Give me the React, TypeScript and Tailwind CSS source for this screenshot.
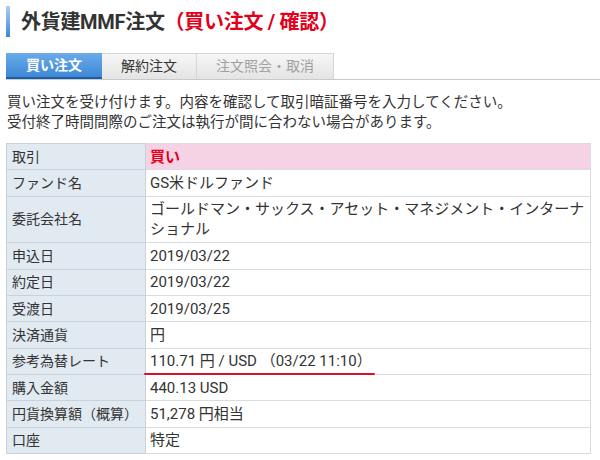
const rows: { label: string; value: React.ReactNode; pink?: boolean }[] = [
  { label: "取引", value: <span className="font-bold text-[#e5001e]">買い</span>, pink: true },
  { label: "ファンド名", value: "GS米ドルファンド" },
  { label: "委託会社名", value: "ゴールドマン・サックス・アセット・マネジメント・インターナショナル" },
  { label: "申込日", value: "2019/03/22" },
  { label: "約定日", value: "2019/03/22" },
  { label: "受渡日", value: "2019/03/25" },
  { label: "決済通貨", value: "円" },
  {
    label: "参考為替レート",
    value: (
      <span className="relative inline-block">
        110.71 円 / USD （03/22 11:10）
        <span className="absolute left-[-6px] right-[-3px] bottom-[-4px] h-[2.5px] rounded-full bg-[#d8102a]" />
      </span>
    ),
  },
  { label: "購入金額", value: "440.13 USD" },
  { label: "円貨換算額（概算）", value: "51,278 円相当" },
  { label: "口座", value: "特定" },
];

const tabs = [
  { name: "買い注文", active: true, w: "w-[96px]" },
  { name: "解約注文", active: false, w: "w-[95px]" },
  { name: "注文照会・取消", active: false, w: "w-[137px]", muted: true },
];

export default function App() {
  return (
    <div
      className="w-[600px] h-[460px] bg-white text-[#333] overflow-hidden"
      style={{ fontFamily: "Roboto, 'Noto Sans CJK JP', sans-serif" }}
    >
      <div className="flex items-center pt-[6px] pl-[6px] h-[37px]">
        <div className="w-[4px] h-[31px] bg-gradient-to-b from-[#a9d0f2] to-[#3f86d6]" />
        <h1 className="ml-[11px] text-[20px] font-bold leading-none tracking-[-0.3px]">
          外貨建MMF注文<span className="text-[#e2001a]">（買い注文 / 確認）</span>
        </h1>
      </div>

      <div className="mt-[16px] ml-[6px] flex border-b border-[#c9c9c9]">
        {tabs.map((t) =>
          t.active ? (
            <div
              key={t.name}
              className={`${t.w} h-[26px] flex items-center justify-center text-[14px] font-bold text-white bg-gradient-to-b from-[#6aaceb] to-[#3d87d5] border-b-2 border-[#1c5ea6]`}
            >
              {t.name}
            </div>
          ) : (
            <div
              key={t.name}
              className={`${t.w} h-[26px] flex items-center justify-center text-[14px] bg-gradient-to-b from-[#f6f6f6] to-[#e4e4e4] border-r border-t border-[#d6d6d6] ${t.muted ? "text-[#a0a0a0]" : "text-[#333]"}`}
            >
              {t.name}
            </div>
          )
        )}
      </div>

      <div className="mt-[13px] ml-[7px] text-[14.5px] leading-[20px]">
        <p>買い注文を受け付けます。内容を確認して取引暗証番号を入力してください。</p>
        <p>受付終了時間間際のご注文は執行が間に合わない場合があります。</p>
      </div>

      <table className="mt-[10px] ml-[6px] w-[585px] table-fixed border-collapse border border-[#c6c9cc] text-[15px] leading-[20px]">
        <colgroup>
          <col className="w-[139px]" />
          <col />
        </colgroup>
        <tbody>
          {rows.map((r) => (
            <tr key={r.label}>
              <td className="bg-[#e2eaf1] border border-[#c9d2db] pl-[5px] pr-0 py-[2.7px] align-middle whitespace-nowrap text-[14px]">
                {r.label}
              </td>
              <td
                className={`border border-[#d9dde1] pl-[4px] pr-[4px] py-[2.7px] align-middle ${r.pink ? "bg-[#f5d3e4]" : "bg-white"}`}
              >
                {r.value}
              </td>
            </tr>
          ))}
        </tbody>
      </table>
    </div>
  );
}
